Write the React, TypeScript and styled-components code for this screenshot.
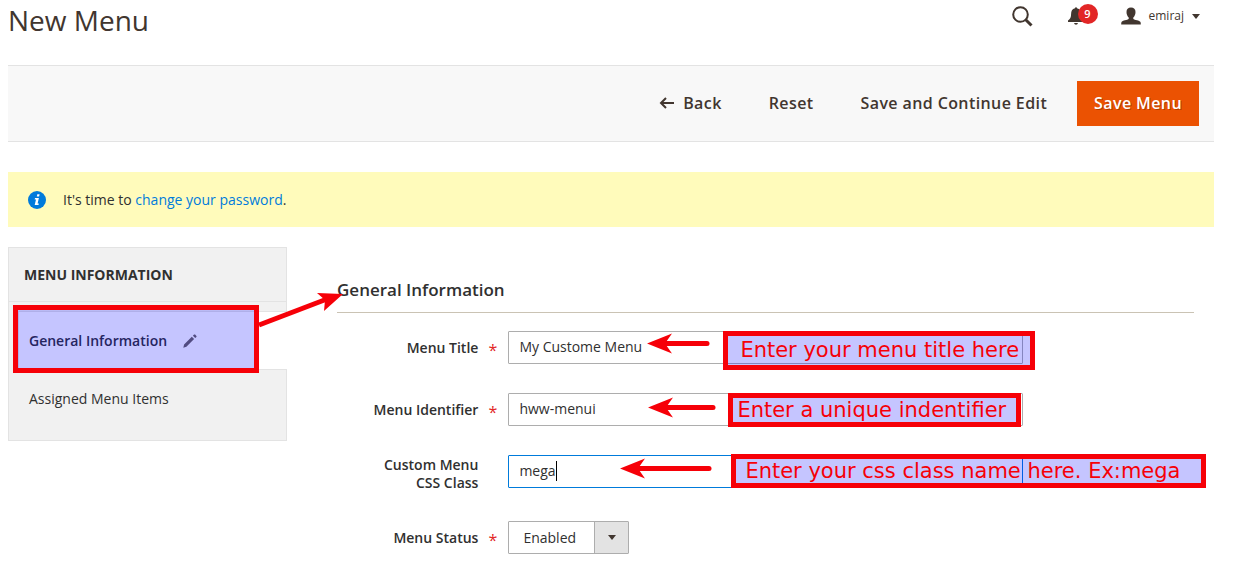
import React from 'react';
import styled, { createGlobalStyle } from 'styled-components';

const Global = createGlobalStyle`
  * { box-sizing: border-box; }
  body {
    margin: 0;
    background: #fff;
    color: #303030;
    font: 14px/20px "Open Sans", "Noto Sans", sans-serif;
  }
  button, input, select { font: inherit; color: inherit; }
`;

const Page = styled.div`
  padding: 0 20px 20px 8px;
`;

const Header = styled.header`
  display: flex;
  justify-content: space-between;
  align-items: flex-start;
  height: 65px;
`;

const Title = styled.h1`
  margin: 0;
  font-size: 28px;
  line-height: 40px;
  font-weight: 400;
  color: #41362f;
`;

const Tools = styled.div`
  display: flex;
  align-items: center;
  height: 32px;
  padding-right: 14px;
  color: #41362f;
`;

const IconButton = styled.button<{ $gap: number }>`
  position: relative;
  display: flex;
  margin: 0 ${p => p.$gap}px 0 0;
  padding: 0;
  border: 0;
  background: none;
`;

const Badge = styled.span`
  position: absolute;
  left: 10px;
  top: -3px;
  width: 20px;
  height: 20px;
  border-radius: 50%;
  background: #e22626;
  color: #fff;
  font-size: 11px;
  line-height: 20px;
  font-weight: 600;
  text-align: center;
`;

const UserButton = styled.button`
  display: flex;
  align-items: center;
  gap: 8px;
  padding: 0;
  border: 0;
  background: none;
  font-size: 12px;
`;

const Toolbar = styled.div`
  display: flex;
  justify-content: flex-end;
  align-items: center;
  padding: 15px;
  border: solid #e3e3e3;
  border-width: 1px 0;
  background: #f8f8f8;
`;

const Action = styled.button<{ $primary?: boolean }>`
  display: flex;
  align-items: center;
  gap: 9px;
  height: 45px;
  margin-left: 13px;
  padding: 0 17px 2px;
  border: 0;
  background: ${p => (p.$primary ? '#eb5202' : 'transparent')};
  color: ${p => (p.$primary ? '#fff' : '#41362f')};
  font-size: 16px;
  font-weight: 600;
  letter-spacing: 0.025em;
  text-shadow: ${p => (p.$primary ? '1px 1px 0 rgba(0, 0, 0, 0.25)' : 'none')};
`;

const Notice = styled.div`
  display: flex;
  align-items: center;
  gap: 17px;
  height: 55px;
  margin: 30px 0 20px;
  padding: 0 20px;
  background: #fffbbb;

  a { color: #007bdb; text-decoration: none; }
`;

const Columns = styled.div`
  display: flex;
  align-items: flex-start;
`;

const Sidebar = styled.nav`
  flex: 0 0 279px;
  border: 1px solid #e3e3e3;
  background: #f1f1f1;
`;

const SidebarTitle = styled.h2`
  margin: 0 0 9px;
  padding: 0 15px;
  border-bottom: 1px solid #e3e3e3;
  font-size: 14px;
  line-height: 53px;
  font-weight: 700;
`;

const TabList = styled.ul`
  margin: 0;
  padding: 0 0 13px;
  list-style: none;
`;

const TabItem = styled.li<{ $active?: boolean }>`
  position: relative;
  margin: 0 ${p => (p.$active ? -1 : 0)}px 0 9px;
  border: solid ${p => (p.$active ? '#e3e3e3' : 'transparent')};
  border-width: ${p => (p.$active ? '1px 0 1px 1px' : '0 0 0 1px')};
  background: ${p => (p.$active ? '#fff' : 'transparent')};

  a {
    display: flex;
    align-items: center;
    gap: 16px;
    height: 57px;
    padding-left: 10px;
    color: #303030;
    font-weight: ${p => (p.$active ? 600 : 400)};
    text-decoration: none;
  }
`;

const Content = styled.form`
  flex: 1;
  min-width: 0;
  margin: 0 20px 0 50px;
`;

const SectionTitle = styled.h2`
  margin: 0 0 18px;
  padding: 30px 0 9px;
  border-bottom: 1px solid #cac3b4;
  font-size: 17px;
  line-height: 26px;
  font-weight: 600;
`;

const Row = styled.div`
  display: grid;
  grid-template-columns: 1fr 3fr 1fr;
  align-items: start;
  margin-bottom: 29px;

  &:last-child { margin-bottom: 0; }
`;

const Label = styled.label<{ $required?: boolean }>`
  position: relative;
  display: flex;
  align-items: center;
  justify-content: flex-end;
  min-height: 33px;
  padding: 1px 30px 0 24px;
  font-weight: 600;
  line-height: 18px;
  text-align: right;

  &::after {
    content: ${p => (p.$required ? '"*"' : 'none')};
    position: absolute;
    right: 11px;
    top: 10px;
    color: #e22626;
    font-size: 16px;
    font-weight: 400;
  }
`;

const Control = styled.div`
  position: relative;
  display: flex;
`;

const TextInput = styled.input<{ $focused?: boolean }>`
  flex: 1;
  min-width: 0;
  height: 33px;
  padding: 0 10px 2px;
  border: 1px solid ${p => (p.$focused ? '#007bdb' : '#adadad')};
  border-radius: 1px;
  outline: 0;
  background: #fff;
`;

const TextCaret = styled.span`
  position: absolute;
  left: 48px;
  top: 6px;
  width: 1px;
  height: 20px;
  background: #000;
`;

const SelectBox = styled.div`
  position: relative;
  display: flex;
`;

const Select = styled.select`
  appearance: none;
  width: 121px;
  height: 33px;
  padding: 1px 34px 0 14px;
  border: 1px solid #adadad;
  border-radius: 1px;
  outline: 0;
  background: #fff;
`;

const SelectArrow = styled.span`
  position: absolute;
  top: 1px;
  right: 1px;
  bottom: 1px;
  display: flex;
  align-items: center;
  justify-content: center;
  width: 34px;
  border-left: 1px solid #adadad;
  background: #e3e3e3;
  pointer-events: none;
`;

const Highlight = styled.div`
  position: absolute;
  left: -6px;
  top: -7px;
  width: 246px;
  height: 68px;
  border: 5px solid #f60008;
  background: rgba(0, 0, 255, 0.227);
  pointer-events: none;
`;

const Pointer = styled.svg<{ $left: number; $top: number }>`
  position: absolute;
  left: ${p => p.$left}px;
  top: ${p => p.$top}px;
  overflow: visible;
  fill: #f60008;
  stroke: #f60008;
  pointer-events: none;
`;

const Callout = styled.div<{ $left: number; $top?: number; $width: number; $height: number; $indent: number }>`
  position: absolute;
  left: ${p => p.$left}px;
  top: ${p => p.$top ?? 0}px;
  display: flex;
  align-items: center;
  width: ${p => p.$width}px;
  height: ${p => p.$height}px;
  padding: 0 0 1px ${p => p.$indent}px;
  border: 5px solid #f60008;
  background: rgba(0, 0, 255, 0.227);
  color: #f60008;
  font: 21px/22px "DejaVu Sans", sans-serif;
  white-space: nowrap;
  pointer-events: none;
`;

const Arrow = ({ left, top, length }: { left: number; top: number; length: number }) => (
  <Pointer $left={left} $top={top} width={length} height="20" aria-hidden="true">
    <path d="M0 10.500L25 .5L18 10.500L25 20.500Z" stroke="none" />
    <path d={`M16 10.5H${length - 3}`} strokeWidth="5" strokeLinecap="round" />
  </Pointer>
);

const Triangle = () => (
  <svg width="8" height="5" aria-hidden="true"><path d="M0 0H8L4 5Z" fill="#41362f" /></svg>
);

export default function App() {
  return (
    <Page>
      <Global />
      <Header>
        <Title>New Menu</Title>
        <Tools>
          <IconButton $gap={35} aria-label="Search">
            <svg width="21" height="21" viewBox="0 0 21 21" fill="none" stroke="#41362f">
              <circle cx="8.5" cy="8.5" r="7.3" strokeWidth="2" />
              <path d="M13.5 13.5L19.5 19.5" strokeWidth="3" />
            </svg>
          </IconButton>
          <IconButton $gap={37} aria-label="Notifications">
            <svg width="16" height="18" viewBox="0 0 16 18" fill="#41362f">
              <path d="M7 1.2a1 1 0 0 1 2 0C12 2 12.800 4 12.900 7c.1 3.500.8 5 3.100 6.500V15H0v-1.500C2.300 12 3 10.500 3.100 7 3.200 4 4 2 7 1.200ZM6 16h4q-.4 1.700-2 1.700T6 16Z" />
            </svg>
            <Badge>9</Badge>
          </IconButton>
          <UserButton>
            <svg width="20" height="18" viewBox="0 0 20 18" fill="#41362f">
              <path d="M10 .5c2.900 0 4.500 1.700 4.500 4.500 0 2.300-.8 4.200-2.200 5.500v1.500c1.200 1 6.200 1.200 7.200 3 .3.700.3 1.500.3 2.500H.2c0-1 0-1.800.3-2.500 1-1.800 6-2 7.200-3v-1.500C6.300 9.200 5.500 7.300 5.500 5 5.500 2.200 7.100.5 10 .5Z" />
            </svg>
            <span>emiraj</span>
            <Triangle />
          </UserButton>
        </Tools>
      </Header>

      <Toolbar>
        <Action>
          <svg width="15" height="12" viewBox="0 0 15 12" fill="none" stroke="#41362f" strokeWidth="2">
            <path d="M7 1L2 6L7 11M2 6H15" />
          </svg>
          Back
        </Action>
        <Action>Reset</Action>
        <Action>Save and Continue Edit</Action>
        <Action $primary>Save Menu</Action>
      </Toolbar>

      <Notice>
        <svg width="18" height="18" viewBox="0 0 18 18" aria-hidden="true">
          <circle cx="9" cy="9" r="9" fill="#007bdb" />
          <path d="M9.300 3.200h2.300l-.5 2.200H8.800ZM7 7h3.900l-1.300 5.600h1.200l-.3 1.400H6.700l1.300-5.600H6.700Z" fill="#fff" />
        </svg>
        <span>It's time to <a href="#password">change your password</a>.</span>
      </Notice>

      <Columns>
        <Sidebar>
          <SidebarTitle>MENU INFORMATION</SidebarTitle>
          <TabList>
            <TabItem $active>
              <a href="#general">
                General Information
                <svg width="14" height="14" viewBox="0 0 14 14" fill="#6a625d" aria-hidden="true">
                  <path d="M.3 13.700l.8-3.200 7.700-7.700 2.300 2.300L3.400 12.800ZM9.900 1.800L11.100.6Q11.600.2 12.100.6L13.400 1.900Q13.800 2.400 13.400 2.900L12.200 4.100Z" />
                </svg>
              </a>
              <Highlight />
              <Pointer $left={240} $top={-18} width="85" height="34" aria-hidden="true">
                <path d="M84 0L58 -1L66 6L65 17Z" stroke="none" />
                <path d="M0 31L68 5" strokeWidth="5" />
              </Pointer>
            </TabItem>
            <TabItem><a href="#items">Assigned Menu Items</a></TabItem>
          </TabList>
        </Sidebar>

        <Content>
          <SectionTitle>General Information</SectionTitle>
          <Row>
            <Label htmlFor="title" $required>Menu Title</Label>
            <Control>
              <TextInput id="title" defaultValue="My Custome Menu" />
              <Arrow left={139} top={2} length={63} />
              <Callout $left={215} $width={312} $height={39} $indent={12}>Enter your menu title here</Callout>
            </Control>
          </Row>
          <Row>
            <Label htmlFor="identifier" $required>Menu Identifier</Label>
            <Control>
              <TextInput id="identifier" defaultValue="hww-menui" />
              <Arrow left={140} top={4} length={68} />
              <Callout $left={220} $width={293} $height={34} $indent={4}>Enter a unique indentifier</Callout>
            </Control>
          </Row>
          <Row>
            <Label htmlFor="css-class">Custom Menu CSS Class</Label>
            <Control>
              <TextInput id="css-class" defaultValue="mega" $focused />
              <TextCaret />
              <Arrow left={112} top={3} length={92} />
              <Callout $left={223} $top={-1} $width={475} $height={34} $indent={9}>
                Enter your css class name here. Ex:mega
              </Callout>
            </Control>
          </Row>
          <Row>
            <Label htmlFor="status" $required>Menu Status</Label>
            <Control>
              <SelectBox>
                <Select id="status" defaultValue="Enabled">
                  <option>Enabled</option>
                  <option>Disabled</option>
                </Select>
                <SelectArrow><Triangle /></SelectArrow>
              </SelectBox>
            </Control>
          </Row>
        </Content>
      </Columns>
    </Page>
  );
}
